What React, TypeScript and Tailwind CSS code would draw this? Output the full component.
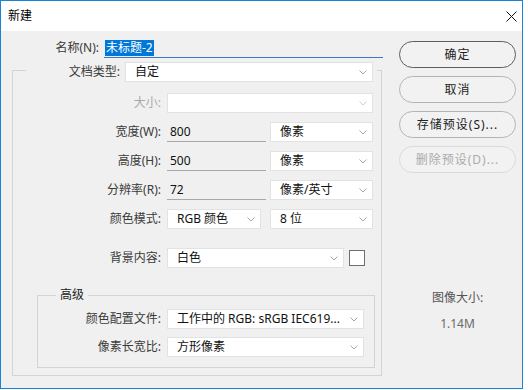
import React from 'react';

const font = { fontFamily: '"Noto Sans", "Noto Sans CJK SC", sans-serif' };

const Chevron = ({ disabled }: { disabled?: boolean }) => (
    <svg width="8" height="5" viewBox="0 0 8 5" className="shrink-0">
        <polyline points="0.5,0.5 4,4 7.5,0.5" fill="none" stroke={disabled ? '#d0d0d0' : '#a6a6a6'} strokeWidth="1" />
    </svg>
);

const Select = ({ text, w, disabled }: { text?: string; w: string; disabled?: boolean }) => (
    <div className={`${w} h-[20px] bg-white border border-[#e2e2e2] flex items-center justify-between pl-[9px] pr-[5px] text-[12px] text-[#111]`}>
        <span className="whitespace-nowrap leading-[18px]">{text}</span>
        <Chevron disabled={disabled} />
    </div>
);

const Field = ({ value }: { value: string }) => (
    <div className="w-[99px] h-[20px] border-b border-[#a8a8a8] pl-[3px] text-[12px] leading-[19px] text-[#111]">{value}</div>
);

const Label = ({ text, w, disabled }: { text: string; w: string; disabled?: boolean }) => (
    <div className={`${w} text-right text-[12px] leading-[20px] ${disabled ? 'text-[#a9a9a9]' : 'text-[#3a3a3a]'}`}>{text}</div>
);

const Btn = ({ text, primary, disabled }: { text: string; primary?: boolean; disabled?: boolean }) => (
    <div
        className={`w-[117px] h-[27px] rounded-full flex items-center justify-center text-[12px] tracking-[1px] bg-[#f2f2f2] border ${
            primary ? 'border-[#5e5e5e] text-[#222]' : disabled ? 'border-[#dadada] text-[#ababab]' : 'border-[#b4b4b4] text-[#222]'
        }`}
    >
        {text}
    </div>
);

export default function App() {
    return (
        <div className="w-[528px] h-[390px] bg-white" style={font}>
            <div className="w-[523px] h-[389px] border border-[#1883d7] flex flex-col">
                {/* title bar */}
                <div className="h-[30px] bg-white flex items-center justify-between pl-[7px] pr-[5px]">
                    <span className="text-[12px] text-black">新建</span>
                    <svg width="11" height="11" viewBox="0 0 11 11">
                        <path d="M0.5 0.5 L10.5 10.5 M10.5 0.5 L0.5 10.5" stroke="#111" strokeWidth="1" />
                    </svg>
                </div>

                <div className="flex-1 bg-[#f0f0f0] flex">
                    {/* left column */}
                    <div className="w-[383px] flex flex-col">
                        <div className="mt-[7px] h-[20px] flex items-center">
                            <Label text="名称(N):" w="w-[98px]" />
                            <div className="ml-[5px] w-[279px] h-[20px] border-b border-[#3b78c6] flex items-center">
                                <span className="ml-[1px] bg-[#0078d7] text-white text-[12px] leading-[16px] px-[1px]">未标题-2</span>
                            </div>
                        </div>

                        <div className="ml-[11px] mt-[12px] w-[370px] h-[306px] border border-[#d4d4d4] flex flex-col">
                            <div className="-mt-[9px] ml-[13px] w-[351px] h-[20px] bg-[#f0f0f0] flex items-center">
                                <Label text="文档类型:" w="w-[94px]" />
                                <div className="ml-[5px]">
                                    <Select text="自定" w="w-[248px]" />
                                </div>
                            </div>

                            <div className="mt-[11px] flex flex-col gap-[9px]">
                                <div className="flex items-center">
                                    <Label text="大小:" w="w-[148px]" disabled />
                                    <div className="ml-[6px]">
                                        <Select w="w-[206px]" disabled />
                                    </div>
                                </div>
                                <div className="flex items-center">
                                    <Label text="宽度(W):" w="w-[148px]" />
                                    <div className="ml-[6px] flex items-center gap-[4px]">
                                        <Field value="800" />
                                        <Select text="像素" w="w-[103px]" />
                                    </div>
                                </div>
                                <div className="flex items-center">
                                    <Label text="高度(H):" w="w-[148px]" />
                                    <div className="ml-[6px] flex items-center gap-[4px]">
                                        <Field value="500" />
                                        <Select text="像素" w="w-[103px]" />
                                    </div>
                                </div>
                                <div className="flex items-center">
                                    <Label text="分辨率(R):" w="w-[148px]" />
                                    <div className="ml-[6px] flex items-center gap-[4px]">
                                        <Field value="72" />
                                        <Select text="像素/英寸" w="w-[103px]" />
                                    </div>
                                </div>
                                <div className="flex items-center">
                                    <Label text="颜色模式:" w="w-[148px]" />
                                    <div className="ml-[6px] flex items-center gap-[9px]">
                                        <Select text="RGB  颜色" w="w-[94px]" />
                                        <Select text="8 位" w="w-[103px]" />
                                    </div>
                                </div>
                                <div className="mt-[10px] flex items-center">
                                    <Label text="背景内容:" w="w-[148px]" />
                                    <div className="ml-[6px] flex items-center gap-[5px]">
                                        <Select text="白色" w="w-[177px]" />
                                        <div className="w-[16px] h-[16px] bg-white border border-[#6f6f6f]" />
                                    </div>
                                </div>
                            </div>

                            {/* advanced */}
                            <div className="ml-[24px] mt-[27px] w-[338px] h-[73px] border border-[#d4d4d4] flex flex-col">
                                <div className="-mt-[9px] ml-[18px] px-[4px] w-fit h-[16px] bg-[#f0f0f0] text-[12px] leading-[16px] text-[#222]">高级</div>
                                <div className="mt-[6px] flex flex-col gap-[8px]">
                                    <div className="flex items-center">
                                        <Label text="颜色配置文件:" w="w-[123px]" />
                                        <div className="ml-[6px]">
                                            <Select text="工作中的 RGB: sRGB IEC619..." w="w-[197px]" />
                                        </div>
                                    </div>
                                    <div className="flex items-center">
                                        <Label text="像素长宽比:" w="w-[123px]" />
                                        <div className="ml-[6px]">
                                            <Select text="方形像素" w="w-[197px]" />
                                        </div>
                                    </div>
                                </div>
                            </div>
                        </div>
                    </div>

                    {/* right column */}
                    <div className="ml-[15px] w-[117px] flex flex-col items-center">
                        <div className="mt-[10px] flex flex-col gap-[8px]">
                            <Btn text="确定" primary />
                            <Btn text="取消" />
                            <Btn text="存储预设(S)..." />
                            <Btn text="删除预设(D)..." disabled />
                        </div>
                        <div className="mt-[117px] text-[12px] leading-[16px] text-[#555]">图像大小:</div>
                        <div className="mt-[10px] text-[12px] leading-[16px] text-[#6a6a6a]">1.14M</div>
                    </div>
                </div>
            </div>
        </div>
    );
}
